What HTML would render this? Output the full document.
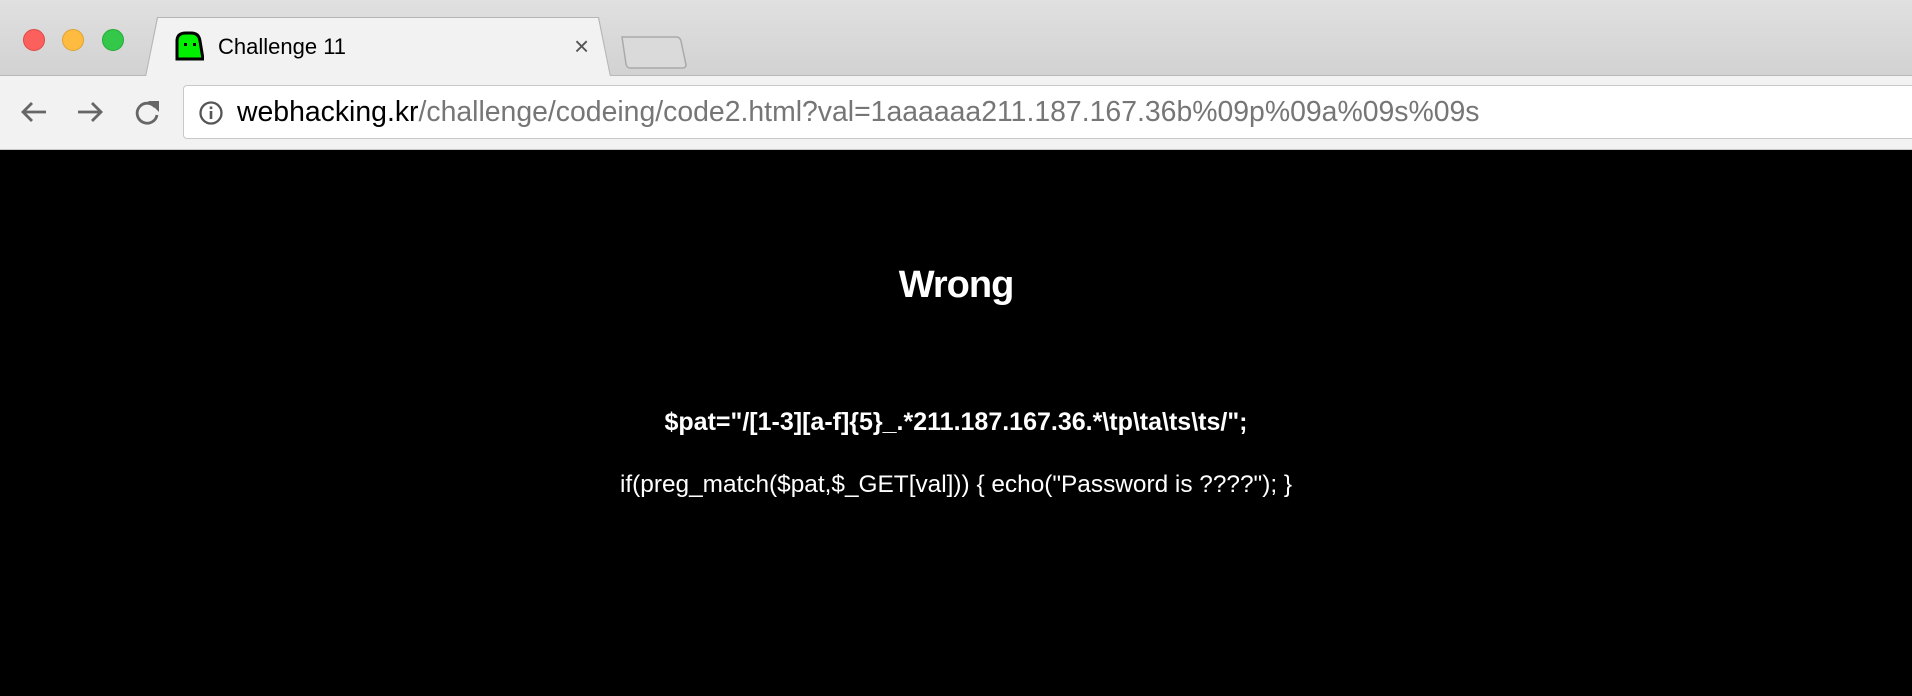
<!DOCTYPE html>
<html><head><meta charset="utf-8"><style>
*{margin:0;padding:0;box-sizing:border-box}
body{width:1912px;height:696px;overflow:hidden;background:#000;font-family:"Liberation Sans",sans-serif;position:relative}
.top{position:absolute;left:0;top:0;width:1912px;height:76px;background:linear-gradient(#e0e0e0,#d2d2d2);border-bottom:1px solid #b8b8b8}
.light{position:absolute;top:29px;width:22px;height:22px;border-radius:50%}
.tab{position:absolute;left:146px;top:18px;width:464px;height:59px;background:#f2f2f2;clip-path:polygon(12px 0,452px 0,464px 59px,0 59px);}
.tabb{position:absolute;left:145px;top:17px;width:466px;height:60px;background:#b5b5b5;clip-path:polygon(12px 0,454px 0,466px 60px,0 60px);}
.tool{position:absolute;left:0;top:76px;width:1912px;height:74px;background:#f2f2f2;border-bottom:1px solid #c8c8c8}
.addr{position:absolute;left:183px;top:85px;width:1740px;height:54px;background:#fff;border:1px solid #c9c9c9;border-radius:4px}
.url{position:absolute;left:237px;top:96px;font-size:28.4px;color:#000;white-space:nowrap}
.url span{color:#767676}
.c{position:absolute;left:0;width:1912px;text-align:center;color:#fff;white-space:nowrap}
</style></head><body>
<div class="top"></div>
<div class="light" style="left:23px;background:#fc605c;border:1px solid #de4a44"></div>
<div class="light" style="left:62px;background:#fdbc40;border:1px solid #dea235"></div>
<div class="light" style="left:102px;background:#34c84a;border:1px solid #27aa35"></div>
<div class="tabb"></div>
<div class="tab"></div>
<svg style="position:absolute;left:620px;top:34px" width="68" height="36"><path d="M2 3 L56 3 Q60 3 61 7 L66 31 Q66 34 62 34 L10 34 Q7 34 6 30 Z" fill="#dadada" stroke="#aaa" stroke-width="1.5"/></svg>
<svg style="position:absolute;left:174px;top:31px" width="30" height="30"><path d="M3 28 L3 10 Q3 2 12 2 L17 2 Q25 2 26 10 L29 28 Z" fill="#00f000" stroke="#000" stroke-width="3"/><rect x="10" y="12" width="3" height="3" fill="#000"/><rect x="19" y="12" width="3" height="3" fill="#000"/></svg>
<div style="position:absolute;left:218px;top:34px;font-size:22px;color:#000">Challenge 11</div>
<div style="position:absolute;left:574px;top:31px;font-size:26px;color:#555">×</div>
<div class="tool"></div>
<svg style="position:absolute;left:18px;top:98px" width="160" height="30" fill="none" stroke="#666" stroke-width="2.8">
<path d="M28 14 H5 M14 5 L5 14 L14 23"/>
<path d="M60 14 H83 M74 5 L83 14 L74 23"/>
<path d="M137 9 A10 10 0 1 0 139 17"/><path fill="#666" stroke="none" d="M130 3 L141 3 L141 14 Z"/>
</svg>
<div class="addr"></div>
<svg style="position:absolute;left:198px;top:100px" width="26" height="26"><circle cx="13" cy="13" r="10.5" fill="none" stroke="#555" stroke-width="2.3"/><rect x="11.7" y="11" width="2.6" height="8" fill="#555"/><rect x="11.7" y="6.5" width="2.6" height="2.6" fill="#555"/></svg>
<div class="url">webhacking.kr<span>/challenge/codeing/code2.html?val=1aaaaaa211.187.167.36b%09p%09a%09s%09s</span></div>
<div class="c" style="top:264px;font-size:38px;font-weight:bold;letter-spacing:-1px">Wrong</div>
<div class="c" style="top:408px;font-size:25px;font-weight:bold">$pat="/[1-3][a-f]{5}_.*211.187.167.36.*\tp\ta\ts\ts/";</div>
<div class="c" style="top:471px;font-size:24.4px">if(preg_match($pat,$_GET[val])) { echo("Password is ????"); }</div>
</body></html>
